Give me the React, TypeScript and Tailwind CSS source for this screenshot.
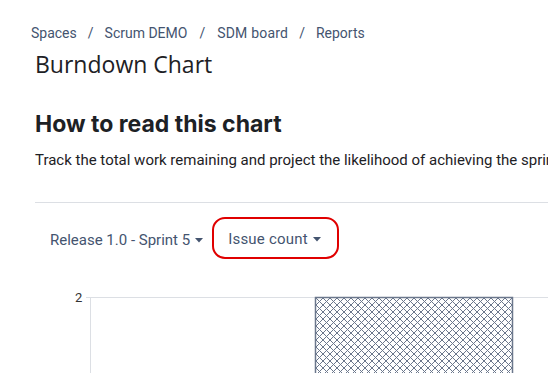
import React from "react";

function Caret() {
  return (
    <svg width="8" height="5" viewBox="0 0 8 5" className="ml-[5px]">
      <path d="M0 0 L8 0 L4 4.5 Z" fill="#44546f" />
    </svg>
  );
}

export default function App() {
  return (
    <div className="w-[548px] h-[373px] overflow-hidden bg-white relative">
      <div className="w-[1100px] pl-[35px]" style={{ fontFamily: "Roboto, 'Liberation Sans', sans-serif" }}>
        <div className="pt-[23px] -ml-[4px] h-[43px] text-[14px] leading-[20px] text-[#44546f] flex items-center">
          <span>Spaces</span>
          <span className="mx-[11px]">/</span>
          <span>Scrum DEMO</span>
          <span className="mx-[12px]">/</span>
          <span className="tracking-[0.2px]">SDM board</span>
          <span className="mx-[11px]">/</span>
          <span>Reports</span>
        </div>
        <h1
          className="mt-[5px] text-[23px] leading-[32px] text-[#1d2125] font-normal"
          style={{ fontFamily: "'Open Sans', 'Noto Sans', sans-serif" }}
        >
          Burndown Chart
        </h1>
        <h2
          className="mt-[28px] text-[23px] leading-[32px] font-bold text-[#1d2125]"
          style={{ fontFamily: "Inter, 'Liberation Sans', sans-serif" }}
        >
          How to read this chart
        </h2>
        <p className="mt-[10px] text-[15px] leading-[20px] text-[#1d2125] whitespace-nowrap">
          Track the total work remaining and project the likelihood of achieving the sprint goal. This helps your team manage its progress and respond accordingly.
        </p>
        <div className="mt-[32px] h-px bg-[#dcdfe4]" />
        <div className="mt-[13px] flex items-center h-[43px]">
          <button className="flex items-center h-[40px] pl-[15px] text-[15px] text-[#44546f] pt-[5px]">
            <span>Release 1.0 - Sprint 5</span>
            <Caret />
          </button>
          <button className="ml-[9px] flex items-center h-[42px] w-[127px] pl-[14px] pt-[4px] border-2 border-[#e00000] rounded-[13px] text-[15px] text-[#44546f] tracking-[0.2px]">
            <span>Issue count</span>
            <Caret />
          </button>
        </div>
        <div className="mt-[26px]">
          <svg width="540" height="90" viewBox="0 0 540 90">
            <defs>
              <pattern id="hatch" x="281" y="13" width="7" height="7" patternUnits="userSpaceOnUse">
                <path d="M0 0 L7 7 M7 0 L0 7" stroke="#6b778c" strokeWidth="1" />
              </pattern>
            </defs>
            <text x="40" y="16.5" fontSize="13" fill="#333" fontFamily="Roboto, sans-serif">2</text>
            <line x1="51" y1="12.5" x2="540" y2="12.5" stroke="#dcdfe4" strokeWidth="1" />
            <line x1="55.5" y1="12" x2="55.5" y2="90" stroke="#dcdfe4" strokeWidth="1" />
            <rect x="280.5" y="12.5" width="197" height="90" fill="url(#hatch)" stroke="#6b778c" strokeWidth="1.5" />
          </svg>
        </div>
      </div>
    </div>
  );
}
